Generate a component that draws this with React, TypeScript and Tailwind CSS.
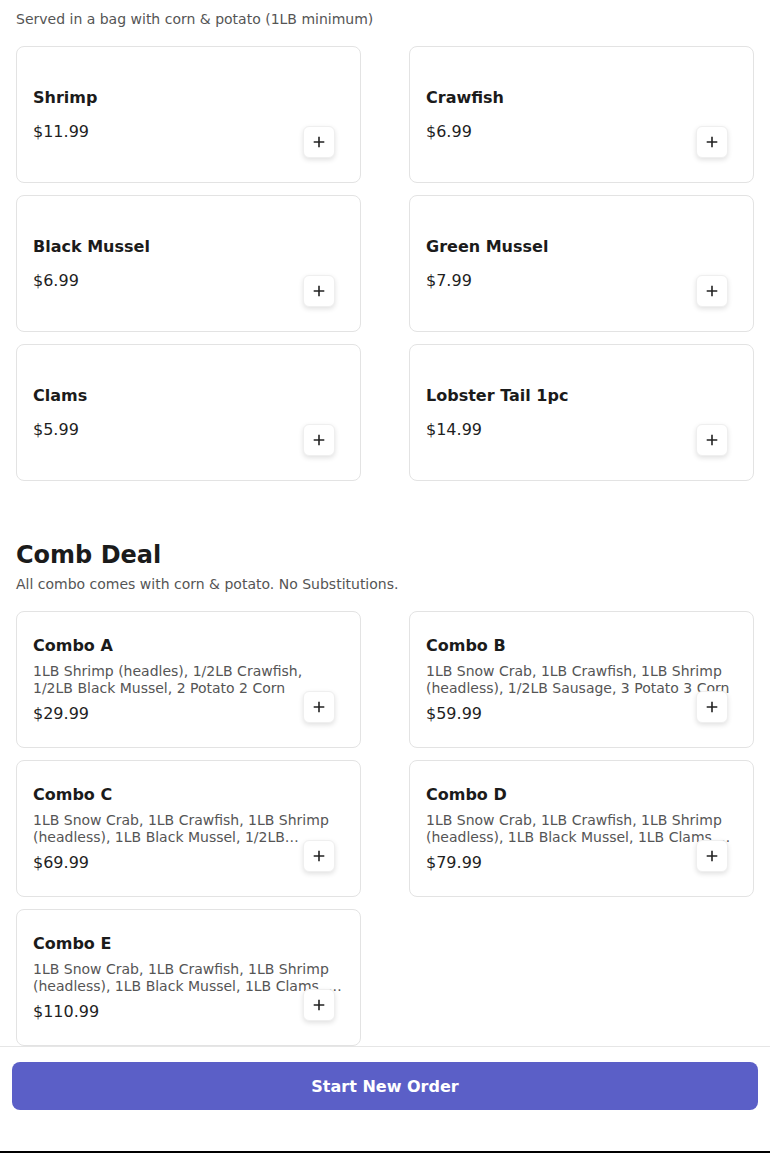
import React from "react";

type Item = { name: string; price: string; desc?: string };

const singles: Item[] = [
  { name: "Shrimp", price: "$11.99" },
  { name: "Crawfish", price: "$6.99" },
  { name: "Black Mussel", price: "$6.99" },
  { name: "Green Mussel", price: "$7.99" },
  { name: "Clams", price: "$5.99" },
  { name: "Lobster Tail 1pc", price: "$14.99" },
];

const combos: Item[] = [
  {
    name: "Combo A",
    price: "$29.99",
    desc: "1LB Shrimp (headles), 1/2LB Crawfish, 1/2LB Black Mussel, 2 Potato 2 Corn",
  },
  {
    name: "Combo B",
    price: "$59.99",
    desc: "1LB Snow Crab, 1LB Crawfish, 1LB Shrimp (headless), 1/2LB Sausage, 3 Potato 3 Corn",
  },
  {
    name: "Combo C",
    price: "$69.99",
    desc: "1LB Snow Crab, 1LB Crawfish, 1LB Shrimp (headless), 1LB Black Mussel, 1/2LB Sausage, 4 Potato 4 Corn",
  },
  {
    name: "Combo D",
    price: "$79.99",
    desc: "1LB Snow Crab, 1LB Crawfish, 1LB Shrimp (headless), 1LB Black Mussel, 1LB Clams, 1/2LB Sausage, 4 Potato 4 Corn",
  },
  {
    name: "Combo E",
    price: "$110.99",
    desc: "1LB Snow Crab, 1LB Crawfish, 1LB Shrimp (headless), 1LB Black Mussel, 1LB Clams, 2 Lobster Tail, 5 Potato 5 Corn",
  },
];

function PlusIcon() {
  return (
    <svg width="12" height="12" viewBox="0 0 12 12" fill="none">
      <path d="M6 1.5v9M1.5 6h9" stroke="#222" strokeWidth="1.6" strokeLinecap="square" />
    </svg>
  );
}

function Card({ item }: { item: Item }) {
  return (
    <div className="relative h-[137px] rounded-lg border border-[#e3e3e3] bg-white p-4 flex flex-col justify-center">
      <div className="text-base leading-6 font-bold text-[#1b1b1b]">{item.name}</div>
      {item.desc ? (
        <p className="mt-[5px] text-sm leading-[17.5px] text-[#555] line-clamp-2">{item.desc}</p>
      ) : null}
      <div className={`${item.desc ? "mt-1" : "mt-[10px]"} text-base leading-6 text-[#1f1f1f]`}>{item.price}</div>
      <button className="absolute right-[25px] bottom-6 w-8 h-8 flex items-center justify-center rounded-md bg-white border border-[#efefef] shadow-[0_2px_5px_rgba(0,0,0,0.12)]">
        <PlusIcon />
      </button>
    </div>
  );
}

export default function App() {
  return (
    <div className="min-h-screen bg-white font-['DejaVu_Sans',sans-serif] text-[#1b1b1b]">
      <div className="px-4 pt-[9px] pb-[120px]">
        <p className="text-sm leading-5 text-[#555]">Served in a bag with corn &amp; potato (1LB minimum)</p>
        <div className="mt-[17px] grid grid-cols-2 gap-x-12 gap-y-3">
          {singles.map((it) => (
            <Card key={it.name} item={it} />
          ))}
        </div>

        <h2 className="mt-[58px] text-2xl leading-8 font-bold text-[#1b1b1b]">Comb Deal</h2>
        <p className="mt-[3px] text-sm leading-5 text-[#555]">All combo comes with corn &amp; potato. No Substitutions.</p>
        <div className="mt-[17px] grid grid-cols-2 gap-x-12 gap-y-3">
          {combos.map((it) => (
            <Card key={it.name} item={it} />
          ))}
        </div>
      </div>

      <div className="fixed left-0 right-0 bottom-0 bg-white border-t border-[#e6e6e6] border-b-2 border-b-black px-3 pt-[15px] pb-[41px]">
        <button className="w-full h-12 rounded-lg bg-[#5b5fc7] text-white text-base font-bold pt-[2px]">
          Start New Order
        </button>
      </div>
    </div>
  );
}
